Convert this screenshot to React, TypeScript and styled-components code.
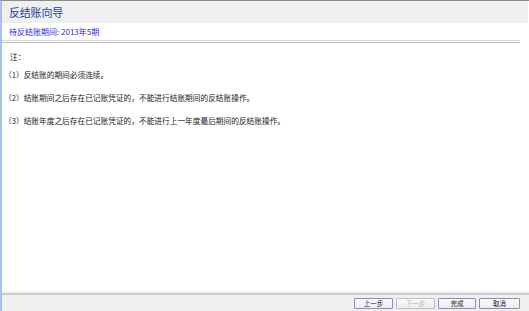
import React from 'react';
import styled, { createGlobalStyle } from 'styled-components';

const GlobalStyle = createGlobalStyle`
  html, body {
    margin: 0;
    padding: 0;
    background: #fff;
  }
  body {
    font-family: "Noto Sans CJK SC", "Liberation Sans", sans-serif;
  }
`;

const StyledWizard = styled.div`
  width: 529px;
  height: 311px;
  box-sizing: border-box;
  display: flex;
  flex-direction: column;
  border-top: 1px solid #8c8c8c;
  border-left: 2px solid #a9c1ea;
  background: #fff;
  overflow: hidden;
`;

const Header = styled.div`
  height: 22px;
  flex: none;
  display: flex;
  align-items: center;
  padding-left: 7px;
  margin-right: 1px;
  background: #efefef;
  .wizard-title {
    font-size: 11px;
    line-height: 1;
    color: #234499;
    letter-spacing: -0.2px;
  }
`;

const Body = styled.div`
  flex: 1;
  display: flex;
  flex-direction: column;
  padding: 0 9px 0 0;
  .period {
    margin: 3px 0 0 7px;
    height: 12px;
    font-size: 8px;
    line-height: 12px;
    color: #2a2ad8;
  }
  .divider {
    margin: 2px 0 0 0;
    height: 1px;
    border-top: 1px solid #d6d6d6;
    border-bottom: 1px solid #bdbdbd;
  }
`;

const Notes = styled.ul`
  list-style: none;
  margin: 8px 0 0 0;
  padding: 0;
  display: flex;
  flex-direction: column;
  gap: 11px;
`;

const Note = styled.li<{ $heading?: boolean }>`
  height: 12px;
  font-size: 7.7px;
  line-height: 12px;
  color: #222;
  padding-left: ${(p) => (p.$heading ? 8 : 2)}px;
  margin-bottom: ${(p) => (p.$heading ? -5 : 0)}px;
  white-space: nowrap;
`;

const Footer = styled.div`
  height: 16px;
  flex: none;
  display: flex;
  align-items: center;
  justify-content: flex-end;
  gap: 3px;
  padding-right: 9px;
  background: #efefef;
  border-top: 2px solid #cfcfcf;
  box-shadow: 0 -2px 0 #f3f3f3;
`;

const WizardButton = styled.button<{ $width: number }>`
  width: ${(p) => p.$width}px;
  height: 11px;
  padding: 0;
  box-sizing: border-box;
  border: 1px solid #7f93bf;
  border-radius: 1px;
  background: linear-gradient(#fbfbfb, #ececec);
  font-family: "Noto Sans CJK SC", sans-serif;
  font-size: 6.5px;
  line-height: 9px;
  color: #222;
  &:disabled {
    color: #b5b5b5;
    border-color: #b6c2da;
  }
`;

const notes = [
  '（1）反结账的期间必须连续。',
  '（2）结账期间之后存在已记账凭证的，不能进行结账期间的反结账操作。',
  '（3）结账年度之后存在已记账凭证的，不能进行上一年度最后期间的反结账操作。',
];

function App() {
  return (
    <>
      <GlobalStyle />
      <StyledWizard>
        <Header>
          <span className="wizard-title">反结账向导</span>
        </Header>
        <Body>
          <div className="period">待反结账期间: 2013年5期</div>
          <div className="divider" />
          <Notes>
            <Note $heading>注：</Note>
            {notes.map((n) => (
              <Note key={n}>{n}</Note>
            ))}
          </Notes>
        </Body>
        <Footer>
          <WizardButton $width={39}>上一步</WizardButton>
          <WizardButton $width={39} disabled>
            下一步
          </WizardButton>
          <WizardButton $width={38}>完成</WizardButton>
          <WizardButton $width={41}>取消</WizardButton>
        </Footer>
      </StyledWizard>
    </>
  );
}

export default App;
